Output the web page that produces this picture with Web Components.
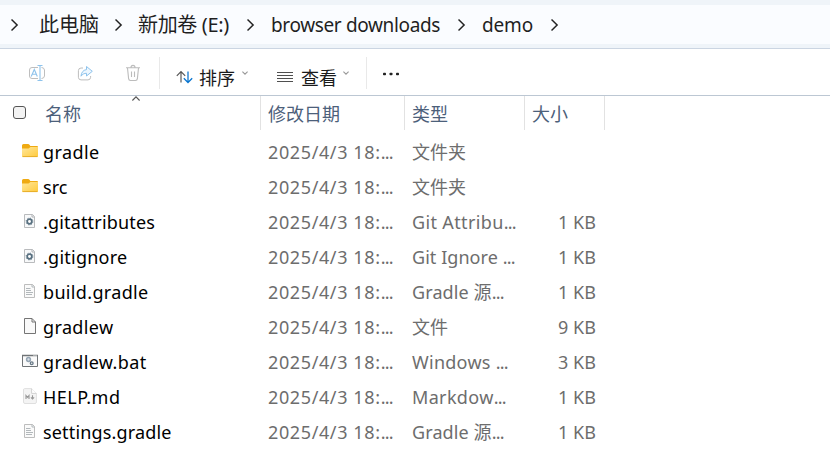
<!DOCTYPE html>
<html lang="zh-CN">
<head>
<meta charset="utf-8">
<title>demo</title>
<style>
html,body{margin:0;background:#fff;overflow:hidden}
</style>
</head>
<body>
<file-explorer></file-explorer>
<script>
const ICONS = {
  chevron: [8, 14, '<path d="M.5 1.500 6.100 7 .5 12.500" fill="none" stroke="#222" stroke-width="1.5"/>'],
  rename: [18, 18, '<path d="M10 3.5H4A2.5 2.5 0 0 0 1.5 6v6A2.5 2.5 0 0 0 4 14.5h6M13.5 3.5A3 3 0 0 1 16.5 6v6a3 3 0 0 1-3 2.5" fill="none" stroke="#bebebe"/><path d="M3.2 12.5 6.3 5.5 9.3 12.5M4.3 10.3h4M9.5 1.5h5M9.5 16.5h5M12 1.5v15" fill="none" stroke="#8ec3ec" stroke-width="1.1"/>'],
  share: [18, 18, '<path d="M7 4H5A2.7 2.7 0 0 0 2.4 6.7v6.6A2.7 2.7 0 0 0 5 15.9h7a2.7 2.7 0 0 0 2.6-2.6V12" fill="none" stroke="#bebebe"/><path d="M10.5 2.5 16.3 7.3 10.5 12V9.3C8.300 9.300 6.500 10 5 12.200 5.300 8.700 7 6 10.500 5.600Z" fill="#edf7ff" stroke="#8ec3ec" stroke-linejoin="round"/>'],
  trash: [18, 18, '<path d="M2 3.700H16M7 3.500C7 .7 11 .7 11 3.500M3.500 4 4.600 14.600Q4.800 16.500 6.500 16.500H11.500Q13.200 16.500 13.400 14.600L14.500 4M7.500 7.500v5.500M10.500 7.500v5.500" fill="none" stroke="#bcbcbc" stroke-width="1.1"/>'],
  sort: [17, 14, '<path d="M.8 5.800 5 1.500 9.200 5.800M5 1.500V12.500" fill="none" stroke="#555" stroke-width="1.15"/><path d="M7.800 8.200 12 12.500 16.200 8.200M12 12.500V1.500" fill="none" stroke="#0874cf" stroke-width="1.25"/>'],
  lines: [16, 12, '<path d="M0 1.500h16M0 4.500h16M0 7.500h16M0 10.500h16" stroke="#4f4f4f" fill="none"/>'],
  drop: [6, 4, '<path d="M.4.700 3 3.200 5.600.700" fill="none" stroke="#999" stroke-width="1.100"/>'],
  up: [8, 5, '<path d="M.4 4.500 4 .9 7.600 4.500" fill="none" stroke="#555" stroke-width="1.100"/>'],
  more: [16, 4, '<g fill="#222"><rect x="0" y=".8" width="3" height="2.400" rx=".8"/><rect x="6.500" y=".8" width="3" height="2.400" rx=".8"/><rect x="13" y=".8" width="3" height="2.400" rx=".8"/></g>'],
  folder: [16, 16, '<defs><linearGradient id="f" x1="0" y1="0" x2="1" y2="1"><stop stop-color="#ffe79b"/><stop offset="1" stop-color="#ffca3c"/></linearGradient></defs><path d="M0 2.500Q0 1 1.500 1H6Q7 1 7.700 2L8.300 3H15Q16 3 16 4V8H0Z" fill="#efaa12"/><path d="M0 5.600H6.500L8.500 4H16V13Q16 14 15 14H1Q0 14 0 13Z" fill="url(#f)"/><path d="M.5 13.600h15" stroke="#e4a923" stroke-width=".9"/>'],
  config: [16, 16, '<path d="M2.500 1.500H10.500L12.500 3.500V14.500H2.500Z" fill="#f8f9fa" stroke="#b9bbbd"/><path d="M10 1.500V4H12.500" fill="none" stroke="#b0b3b6"/><circle cx="7.500" cy="8.500" r="2.300" fill="#fff" stroke="#587080" stroke-width="1.700"/><circle cx="7.500" cy="8.500" r="3.400" fill="none" stroke="#587080" stroke-width=".9" stroke-dasharray="1.200 1.470"/>'],
  text: [16, 16, '<path d="M2.500 1.500H10.500L12.500 3.500V14.500H2.500Z" fill="#fafafa" stroke="#bdbdbd"/><path d="M10 1.500V4H12.500M4 5.500H8.500M4 7.500h5M4 9.500h7M4 11.500h6" fill="none" stroke="#b2b8bb"/>'],
  blank: [16, 16, '<path d="M2.500.500H10L13.500 4V15.500H2.500Z" fill="#f9f9f9" stroke="#757575"/><path d="M10 .5V4H13.500" fill="none" stroke="#757575"/>'],
  batch: [16, 16, '<path d="M.5 2.500H15.500V13.500H.500Z" fill="#fafafa" stroke="#707477"/><path d="M0 2.500h16" stroke="#707477" stroke-width="1.500"/><path d="M11.500 2.700h1M13.500 2.700h1" stroke="#fff"/><circle cx="6.500" cy="6.500" r="1.900" fill="#d9e1e8" stroke="#95a5b3" stroke-width="1.500"/><circle cx="9.700" cy="10.300" r="1.400" fill="#eee" stroke="#687987" stroke-width="1.300"/>'],
  markdown: [16, 16, '<path d="M2.500.600H9.600L14.400 5.400V14Q14.400 15.500 13 15.500H3Q1.500 15.500 1.500 14V2Q1.500.600 2.500.600Z" fill="#f4f4f4" stroke="#dfdfdf"/><path d="M9.600.600V5.400H14.400" fill="#fff" stroke="#d2d2d2"/><path d="M4 11V7.500L5.500 9.300 7 7.500V11M10.500 7.300V10.500M8.900 9.300 10.500 10.900 12.100 9.300" fill="none" stroke="#989898" stroke-width="1.100"/>']
};

class UiIcon extends HTMLElement {
  connectedCallback() {
    const [w, h, art] = ICONS[this.getAttribute('name')];
    this.attachShadow({mode:'open'}).innerHTML =
      `<style>:host{display:block;flex:none;width:${w}px;height:${h}px}svg{display:block}</style>
       <svg width="${w}" height="${h}" viewBox="0 0 ${w} ${h}">${art}</svg>`;
  }
}
customElements.define('ui-icon', UiIcon);

// A single-line label whose tracking is adjusted to the width given in "w".
// A trailing ellipsis is kept tight.
class UiLabel extends HTMLElement {
  connectedCallback() {
    const text = this.textContent;
    const cut = text.endsWith('...');
    const stem = cut ? text.slice(0, -3) : text;
    this.attachShadow({mode:'open'}).innerHTML =
      `<style>:host{display:block;flex:none;white-space:pre}.dots{letter-spacing:-.7px}</style><span class="all"><span class="stem"></span>${cut ? '<span class="dots">...</span>' : ''}</span>`;
    const span = this.shadowRoot.querySelector('.stem');
    span.textContent = stem;
    const w = +this.getAttribute('w');
    if (!w) return;
    const natural = this.shadowRoot.querySelector('.all').getBoundingClientRect().width;
    span.style.letterSpacing = (w - natural) / stem.length + 'px';
    this.style.width = w + 'px';
  }
}
customElements.define('ui-label', UiLabel);

class PathBar extends HTMLElement {
  connectedCallback() {
    this.attachShadow({mode:'open'}).innerHTML = `
    <style>
      :host{display:block;box-sizing:border-box;height:49px;padding:5px 0 4px;background:#eff4f9;border-bottom:1px solid #cbd5e2}
      nav{display:flex;align-items:center;height:39px;background:#fafcff;padding-left:11px;font-size:19px;color:#1f1f1f;line-height:39px}
      ui-icon{margin:1px 15px 0 18px}
      ui-icon:first-child{margin-left:0;margin-right:20px}
      ui-label{padding-top:1px}
      .cn{font-size:20px;padding-top:0}
    </style>
    <nav>
      <ui-icon name="chevron"></ui-icon><ui-label class="cn" w="60">此电脑</ui-label>
      <ui-icon name="chevron" style="margin-left:16px"></ui-icon><ui-label class="cn" w="91">新加卷 (E:)</ui-label>
      <ui-icon name="chevron" style="margin-right:16px"></ui-icon><ui-label w="169">browser downloads</ui-label>
      <ui-icon name="chevron" style="margin-right:16px"></ui-icon><ui-label w="51">demo</ui-label>
      <ui-icon name="chevron"></ui-icon>
    </nav>`;
  }
}
customElements.define('path-bar', PathBar);

class ToolBar extends HTMLElement {
  connectedCallback() {
    this.attachShadow({mode:'open'}).innerHTML = `
    <style>
      :host{display:flex;box-sizing:border-box;height:47px;padding-left:28px;border-bottom:1px solid #bcc7d3;font-size:18px;color:#1b1b1b;background:#fff}
      .acts{display:flex;gap:30px;padding-top:15px}
      i{width:1px;height:32px;background:#e9e9e9;margin-top:8px}
      .cmd{display:flex;padding-top:15px;line-height:28px}
    </style>
    <div class="acts"><ui-icon name="rename"></ui-icon><ui-icon name="share"></ui-icon><ui-icon name="trash"></ui-icon></div>
    <i style="margin-left:17px"></i>
    <div class="cmd" style="margin-left:16px"><ui-icon name="sort" style="margin-top:6px"></ui-icon><ui-label style="margin-left:6px">排序</ui-label><ui-icon name="drop" style="margin:7px 0 0 7px"></ui-icon></div>
    <div class="cmd" style="margin-left:29px"><ui-icon name="lines" style="margin-top:7px"></ui-icon><ui-label style="margin-left:8px">查看</ui-label><ui-icon name="drop" style="margin:7px 0 0 6px"></ui-icon></div>
    <i style="margin-left:17px"></i>
    <ui-icon name="more" style="margin:23px 0 0 16px"></ui-icon>`;
  }
}
customElements.define('tool-bar', ToolBar);

class ListHeader extends HTMLElement {
  connectedCallback() {
    this.attachShadow({mode:'open'}).innerHTML = `
    <style>
      :host{display:grid;grid-template-columns:261px 144px 120px 80px;height:34px;line-height:36px;font-size:18px;color:#4c607a}
      div{box-sizing:border-box;height:34px;border-right:1px solid #e2e2e2;padding-left:7px;position:relative}
      .name{display:flex;padding-left:13px}
      b{box-sizing:border-box;width:13px;height:13px;margin:10px 19px 0 0;border:1px solid #555;border-radius:3px;background:#f3f3f3}
      .name ui-icon{position:absolute;left:132px;top:0}
    </style>
    <div class="name"><b></b><ui-label>名称</ui-label><ui-icon name="up"></ui-icon></div>
    <div><ui-label>修改日期</ui-label></div><div><ui-label>类型</ui-label></div><div><ui-label>大小</ui-label></div>`;
  }
}
customElements.define('list-header', ListHeader);

class FileRow extends HTMLElement {
  connectedCallback() {
    const a = n => this.getAttribute(n) || '';
    this.attachShadow({mode:'open'}).innerHTML = `
    <style>
      :host{display:grid;grid-template-columns:21px 225px 144px 120px 64px;padding-left:22px;height:35px;line-height:35px;font-size:18px;color:#6d6d6d}
      ui-icon{margin-top:8px}
      .name{color:#000}
      .size{display:flex;justify-content:flex-end}
    </style>
    <ui-icon name="${a('icon')}"></ui-icon>
    <ui-label class="name" w="${a('nw')}">${a('name')}</ui-label>
    <ui-label w="125">2025/4/3 18:...</ui-label>
    <ui-label w="${a('tw')}">${a('type')}</ui-label>
    <div class="size">${a('size') ? `<ui-label w="38">${a('size')}</ui-label>` : ''}</div>`;
  }
}
customElements.define('file-row', FileRow);

const FILES = [
  ['folder','gradle',56.5,'文件夹','',''],
  ['folder','src',24.5,'文件夹','',''],
  ['config','.gitattributes',112,'Git Attribu...',104,'1 KB'],
  ['config','.gitignore',84.5,'Git Ignore ...',103,'1 KB'],
  ['text','build.gradle',105.5,'Gradle 源...',92,'1 KB'],
  ['blank','gradlew',70.5,'文件','','9 KB'],
  ['batch','gradlew.bat',103.5,'Windows ...',96,'3 KB'],
  ['markdown','HELP.md',77.5,'Markdow...',94,'1 KB'],
  ['text','settings.gradle',128.5,'Gradle 源...',92,'1 KB']
];
class FileExplorer extends HTMLElement {
  connectedCallback() {
    this.attachShadow({mode:'open'}).innerHTML = `
    <style>
      :host{display:block;width:830px;height:469px;overflow:hidden;background:#fff;font-family:"Noto Sans","Noto Sans CJK SC",sans-serif}
      main{padding-top:5px}
    </style>
    <path-bar></path-bar><tool-bar></tool-bar><list-header></list-header>
    <main>${FILES.map(([i,n,nw,t,tw,s]) => `<file-row icon="${i}" name="${n}" nw="${nw}" type="${t}" tw="${tw}" size="${s}"></file-row>`).join('')}</main>`;
  }
}
customElements.define('file-explorer', FileExplorer);
</script>
</body>
</html>
